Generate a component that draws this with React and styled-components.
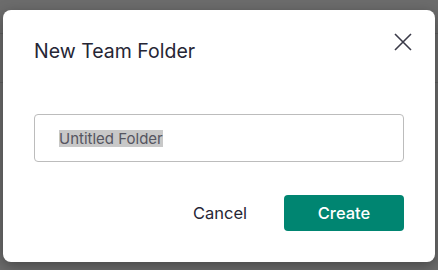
import styled, { createGlobalStyle } from 'styled-components';

const GlobalStyle = createGlobalStyle`
  html, body {
    margin: 0;
    padding: 0;
  }
  body {
    width: 438px;
    height: 270px;
    overflow: hidden;
    background:
      linear-gradient(#5f5f5f, #5f5f5f) 0 33px / 100% 1px no-repeat,
      linear-gradient(#5f5f5f, #5f5f5f) 0 82px / 100% 1px no-repeat,
      #6c6c6c;
    font-family: Inter, 'Noto Sans', sans-serif;
  }
`;

const Modal = styled.div`
  box-sizing: border-box;
  width: 432px;
  height: 252px;
  margin: 10px 0 0 3px;
  background: #ffffff;
  border-radius: 8px;
  box-shadow: 0 4px 14px rgba(0, 0, 0, 0.35);
  display: flex;
  flex-direction: column;
`;

const Header = styled.div`
  display: flex;
  justify-content: space-between;
  align-items: flex-start;
  padding: 16px 16px 0 31px;
`;

const Title = styled.h2`
  margin: 10.5px 0 0;
  font-size: 19.5px;
  line-height: 28px;
  font-weight: 400;
  color: #262635;
`;

const CloseButton = styled.button`
  width: 32px;
  height: 32px;
  padding: 0;
  border: none;
  background: transparent;
  display: flex;
  align-items: center;
  justify-content: center;
  cursor: pointer;
  color: #3a3a48;
`;

const Body = styled.div`
  padding: 49.5px 31px 0;
`;

const Field = styled.div`
  box-sizing: border-box;
  height: 48px;
  border: 1px solid #bcbcbc;
  border-radius: 4px;
  padding: 0 24px;
  display: flex;
  align-items: center;
`;

const Selected = styled.span`
  background: #c8c8c8;
  color: #555560;
  font-size: 15px;
  line-height: 17px;
`;

const Footer = styled.div`
  display: flex;
  justify-content: flex-end;
  align-items: center;
  gap: 21px;
  padding: 33px 31px 0;
`;

const Button = styled.button`
  height: 36px;
  border: none;
  border-radius: 4px;
  font-family: Inter, 'Noto Sans', sans-serif;
  font-size: 16.5px;
  cursor: pointer;
  padding: 0 16px;
  background: ${(p) => (p.$primary ? '#008571' : 'transparent')};
  color: ${(p) => (p.$primary ? '#ffffff' : '#262635')};
  font-weight: ${(p) => (p.$primary ? 500 : 400)};
  width: ${(p) => (p.$primary ? '120px' : 'auto')};
`;

export default function App() {
  return (
    <>
      <GlobalStyle />
      <Modal>
        <Header>
          <Title>New Team Folder</Title>
          <CloseButton aria-label='Close'>
            <svg width='18' height='18' viewBox='0 0 18 18' fill='none'>
              <path
                d='M1 1L17 17M17 1L1 17'
                stroke='currentColor'
                strokeWidth='1.6'
              />
            </svg>
          </CloseButton>
        </Header>
        <Body>
          <Field>
            <Selected>Untitled Folder</Selected>
          </Field>
        </Body>
        <Footer>
          <Button>Cancel</Button>
          <Button $primary>Create</Button>
        </Footer>
      </Modal>
    </>
  );
}
